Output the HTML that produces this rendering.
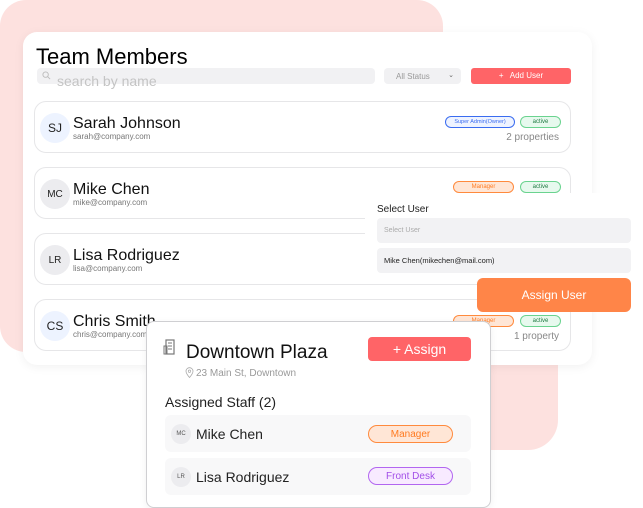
<!DOCTYPE html>
<html><head><meta charset="utf-8"><style>
*{box-sizing:border-box;margin:0;padding:0}
body{width:643px;height:508px;position:relative;overflow:hidden;background:#fff;font-family:"Liberation Sans",sans-serif;color:#111}
.abs{position:absolute}
.pink{background:#fde1df}
.card{left:23px;top:32px;width:569px;height:333px;background:#fff;border-radius:14px;box-shadow:0 2px 10px rgba(0,0,0,.06)}
.row{left:34px;width:537px;height:52px;border:1px solid #e6e6e8;border-radius:12px;background:#fff}
.av{width:30px;height:30px;border-radius:50%;left:5px;top:11px;display:flex;align-items:center;justify-content:center;font-size:12px;color:#222}
.nm{left:38px;top:13px;font-size:16px;color:#111}
.em{left:38px;top:30px;font-size:8px;color:#777}
.b{border-radius:8px;font-size:6px;height:12px;display:flex;align-items:center;justify-content:center;border:1px solid}
.act{background:#e7f9ee;border-color:#6ad38f;color:#1f7a42;width:41px}
.mgr{background:#ffe6d6;border-color:#ff8a3d;color:#ff7a20;width:61px}
</style></head><body>
<div class="abs pink" style="left:0;top:0;width:443px;height:352px;border-radius:26px"></div>
<div class="abs pink" style="left:300px;top:200px;width:258px;height:250px;border-radius:30px"></div>
<div class="abs card"></div>
<div class="abs" style="left:36px;top:44px;font-size:22px;color:#000">Team Members</div>
<div class="abs" style="left:37px;top:68px;width:338px;height:16px;background:#f1f1f3;border-radius:4px"></div>
<svg class="abs" style="left:42px;top:71px" width="9" height="9" viewBox="0 0 10 10"><circle cx="4" cy="4" r="3" fill="none" stroke="#bbb" stroke-width="1"/><path d="M6.3 6.3L9 9" stroke="#bbb"/></svg>
<div class="abs" style="left:57px;top:73px;font-size:14px;color:#c4c4c4">search by name</div>
<div class="abs" style="left:384px;top:68px;width:77px;height:16px;background:#f1f1f3;border-radius:4px;font-size:8px;color:#999;padding:4px 0 0 12px">All Status<span style="position:absolute;right:7px;top:3px;color:#666;font-size:7px">⌄</span></div>
<div class="abs" style="left:471px;top:68px;width:100px;height:16px;background:#ff6467;border-radius:3px;font-size:8px;color:#fff;text-align:center;line-height:16px">+&nbsp;&nbsp; Add User</div>

<div class="abs row" style="top:101px"><div class="abs av" style="background:#edf3ff">SJ</div><div class="abs nm">Sarah Johnson</div><div class="abs em">sarah@company.com</div>
<div class="abs b" style="left:410px;top:14px;width:70px;background:#eef3ff;border-color:#3a6cf0;color:#3a6cf0;font-size:5.5px">Super Admin(Owner)</div>
<div class="abs b act" style="left:485px;top:14px">active</div>
<div class="abs" style="right:11px;top:30px;font-size:10px;color:#888">2 properties</div></div>
<div class="abs row" style="top:167px"><div class="abs av" style="background:#ececef;font-size:10px">MC</div><div class="abs nm">Mike Chen</div><div class="abs em">mike@company.com</div>
<div class="abs b mgr" style="left:418px;top:13px">Manager</div><div class="abs b act" style="left:485px;top:13px">active</div></div>
<div class="abs row" style="top:233px"><div class="abs av" style="background:#ececef;font-size:10px">LR</div><div class="abs nm">Lisa Rodriguez</div><div class="abs em">lisa@company.com</div></div>
<div class="abs row" style="top:299px"><div class="abs av" style="background:#edf3ff">CS</div><div class="abs nm">Chris Smith</div><div class="abs em">chris@company.com</div>
<div class="abs b mgr" style="left:418px;top:15px">Manager</div><div class="abs b act" style="left:485px;top:15px">active</div>
<div class="abs" style="right:11px;top:31px;font-size:10px;color:#888">1 property</div></div>

<div class="abs" style="left:365px;top:193px;width:278px;height:85px;background:#fff"></div>
<div class="abs" style="left:377px;top:204px;font-size:10px;color:#222">Select User</div>
<div class="abs" style="left:377px;top:218px;width:254px;height:25px;background:#f2f2f4;border-radius:4px;font-size:7px;color:#aaa;padding:9px 0 0 7px">Select User</div>
<div class="abs" style="left:377px;top:248px;width:254px;height:25px;background:#f2f2f4;border-radius:4px;font-size:7.5px;color:#222;padding:8px 0 0 7px">Mike Chen(mikechen@mail.com)</div>
<div class="abs" style="left:477px;top:278px;width:154px;height:34px;background:#ff8548;border-radius:6px;color:#fff;font-size:12px;text-align:center;line-height:34px">Assign User</div>

<div class="abs" style="left:146px;top:321px;width:345px;height:187px;background:#fff;border:1px solid #cfcfd2;border-radius:8px;box-shadow:0 2px 8px rgba(0,0,0,.06)"></div>
<svg class="abs" style="left:163px;top:339px" width="14" height="16" viewBox="0 0 14 16"><rect x="3" y="1" width="8" height="14" fill="none" stroke="#777" stroke-width="1.2"/><rect x="1" y="7" width="3" height="8" fill="none" stroke="#777"/><path d="M5 4h4M5 7h4M5 10h4" stroke="#777"/></svg>
<div class="abs" style="left:186px;top:342px;font-size:19px;color:#111">Downtown Plaza</div>
<div class="abs" style="left:368px;top:337px;width:103px;height:24px;background:#ff6467;border-radius:4px;color:#fff;font-size:14px;text-align:center;line-height:24px">+ Assign</div>
<svg class="abs" style="left:185px;top:367px" width="9" height="11" viewBox="0 0 9 11"><path d="M4.5 10.5C2 7.5 1 6 1 4.2a3.5 3.5 0 017 0C8 6 7 7.5 4.5 10.5z" fill="none" stroke="#aaa" stroke-width=".8"/><circle cx="4.5" cy="4.2" r="1.2" fill="none" stroke="#aaa" stroke-width=".7"/></svg>
<div class="abs" style="left:196px;top:368px;font-size:10px;color:#999">23 Main St, Downtown</div>
<div class="abs" style="left:165px;top:394px;font-size:14px;color:#222">Assigned Staff (2)</div>
<div class="abs" style="left:165px;top:415px;width:306px;height:37px;background:#f8f8f9;border-radius:6px"></div>
<div class="abs" style="left:171px;top:424px;width:20px;height:20px;border-radius:50%;background:#ececef;font-size:6px;color:#555;text-align:center;line-height:20px">MC</div>
<div class="abs" style="left:196px;top:426px;font-size:14px;color:#222">Mike Chen</div>
<div class="abs b mgr" style="left:368px;top:425px;width:85px;height:18px;font-size:10px;border-radius:9px">Manager</div>
<div class="abs" style="left:165px;top:458px;width:306px;height:37px;background:#f8f8f9;border-radius:6px"></div>
<div class="abs" style="left:171px;top:467px;width:20px;height:20px;border-radius:50%;background:#ececef;font-size:6px;color:#555;text-align:center;line-height:20px">LR</div>
<div class="abs" style="left:196px;top:469px;font-size:14px;color:#222">Lisa Rodriguez</div>
<div class="abs b" style="left:368px;top:467px;width:85px;height:18px;font-size:10px;border-radius:9px;background:#f8eaff;border-color:#b266f0;color:#a24ee8">Front Desk</div>
</body></html>
